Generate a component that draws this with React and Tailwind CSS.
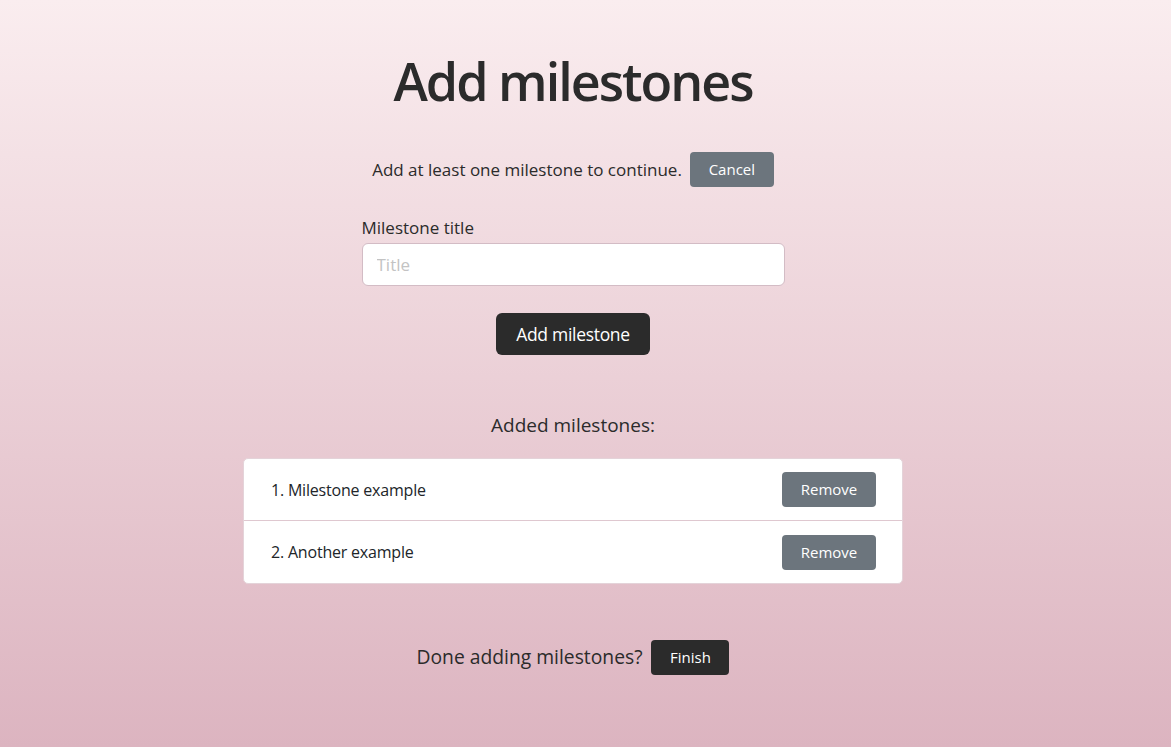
import { useState } from "react";

const FONT = { fontFamily: '"Open Sans", "Noto Sans", sans-serif' };

const INITIAL = ["Milestone example", "Another example"];

export default function App() {
  const [title, setTitle] = useState("");
  const [milestones, setMilestones] = useState(INITIAL);

  const add = () => {
    if (!title.trim()) return;
    setMilestones([...milestones, title.trim()]);
    setTitle("");
  };

  return (
    <div
      style={FONT}
      className="min-h-screen w-full bg-gradient-to-b from-[#faedef] to-[#dcb4c0] text-[#2b2b2b]"
    >
      <div className="flex w-[1146px] flex-col items-center pt-[47px] pb-[72px]">
        <h1 className="text-[52px] leading-[67px] font-semibold tracking-[-2px]">Add milestones</h1>

        {/* intro row */}
        <div className="mt-[38px] flex items-center gap-2">
          <p className="text-[17px]">Add at least one milestone to continue.</p>
          <button className="h-[35px] w-[84px] rounded-[4px] bg-[#6c757d] text-[15px] text-white">
            Cancel
          </button>
        </div>

        {/* form */}
        <div className="mt-[29px] flex w-[423px] flex-col">
          <label className="text-[17px] leading-6">Milestone title</label>
          <input
            value={title}
            onChange={(e) => setTitle(e.target.value)}
            placeholder="Title"
            className="mt-[3px] h-[43px] rounded-[6px] border border-[#d3bcc5] bg-white px-[14px] text-[17px] outline-none placeholder:text-[#c3c3c3]"
          />
        </div>

        <button
          onClick={add}
          className="mt-[27px] h-[42px] w-[154px] rounded-[6px] bg-[#2b2b2b] text-[17.5px] text-white tracking-[-0.3px]"
        >
          Add milestone
        </button>

        <h2 className="mt-[56px] text-[19px] leading-7">Added milestones:</h2>

        <ul className="mt-[19px] w-[660px] overflow-hidden rounded-[5px] border border-[#e4d3d9] bg-white">
          {milestones.map((m, i) => (
            <li
              key={i}
              className="flex h-[62px] items-center justify-between border-b border-[#dfc8d0] pr-[26px] pl-[27px] last:border-b-0"
            >
              <span className="text-[16px] tracking-[-0.2px] text-[#212529]">
                {i + 1}. {m}
              </span>
              <button
                onClick={() => setMilestones(milestones.filter((_, j) => j !== i))}
                className="h-[35px] w-[94px] rounded-[4px] bg-[#6c757d] text-[15px] text-white"
              >
                Remove
              </button>
            </li>
          ))}
        </ul>

        {/* finish row */}
        <div className="mt-[56px] flex items-center gap-[9px]">
          <p className="text-[19.3px]">Done adding milestones?</p>
          <button className="h-[35px] w-[78px] rounded-[4px] bg-[#2b2b2b] text-[15px] text-white">
            Finish
          </button>
        </div>
      </div>
    </div>
  );
}
